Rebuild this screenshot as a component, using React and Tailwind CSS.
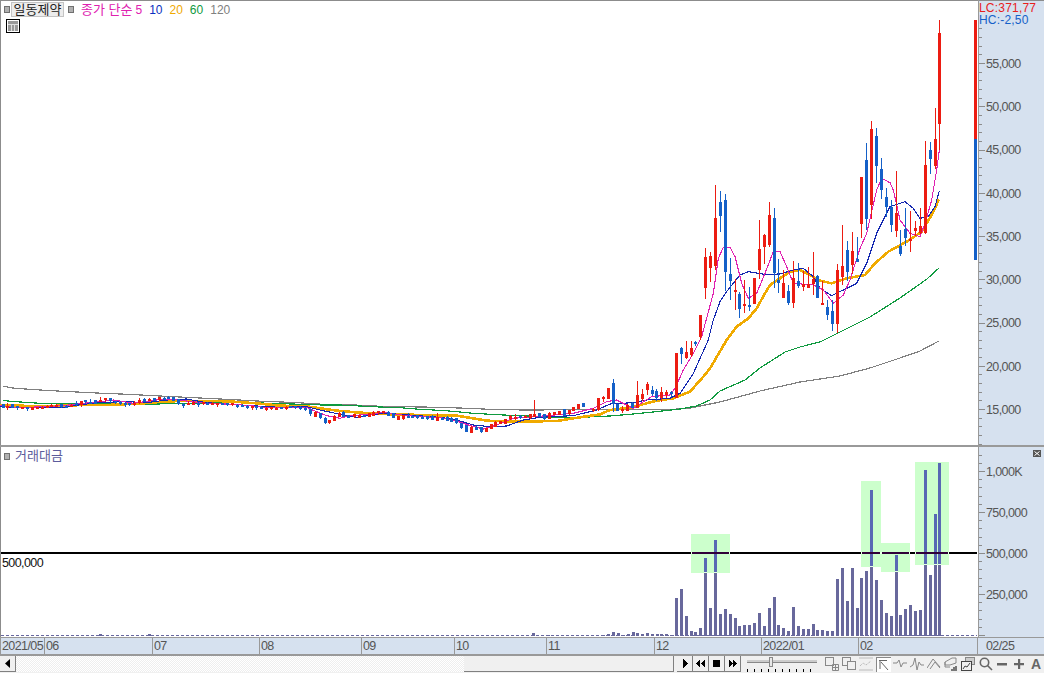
import React from "react";

const RED = "#ec1c12";
const BLUE = "#1460c8";

// crops were read at 3x, so points come in as [x, y] of the crop and get scaled back
const crop = (ox, oy, list) => list.map(([x, y]) => [ox + x / 3, oy + y / 3]);
const lineOf = (pts) => pts.map((p) => p.join(",")).join(" ");

// flat part of the chart: [x, colour, body top, body bottom, wick top, wick bottom]
const flatA = [
  [10, "b", 88, 98, 86, 100], [22, "r", 92, 96, 85, 105], [37, "b", 88, 98, 87, 99], [52, "b", 92, 100, 92, 105],
  [67, "r", 96, 101, 95, 102], [82, "b", 97, 103, 96, 107], [97, "r", 97, 104, 96, 105], [112, "r", 97, 100, 96, 101],
  [127, "r", 96, 100, 94, 101], [140, "r", 93, 97, 91, 98], [154, "r", 90, 95, 87, 97], [169, "r", 90, 93, 87, 96],
  [184, "b", 87, 97, 86, 98], [199, "b", 92, 95, 90, 96], [214, "r", 90, 93, 86, 96], [229, "b", 83, 91, 78, 93],
  [244, "r", 79, 91, 78, 95], [256, "b", 76, 82, 76, 88], [271, "b", 82, 85, 72, 87], [286, "b", 76, 86, 75, 87],
  [301, "r", 75, 78, 65, 80], [316, "r", 70, 73, 70, 80], [331, "b", 70, 77, 70, 85], [346, "b", 78, 85, 77, 86],
  [361, "b", 80, 88, 79, 89], [376, "b", 83, 88, 80, 96], [388, "b", 84, 90, 83, 94], [403, "r", 83, 88, 78, 93],
  [418, "r", 75, 83, 70, 88], [433, "b", 72, 80, 69, 81], [448, "r", 72, 75, 69, 78], [463, "b", 70, 78, 69, 79],
  [478, "r", 67, 75, 67, 78], [493, "b", 68, 72, 65, 76], [505, "b", 67, 72, 64, 73], [520, "b", 66, 77, 65, 78],
  [535, "b", 72, 86, 71, 90], [550, "b", 87, 90, 85, 98], [565, "r", 84, 89, 78, 91], [580, "r", 80, 90, 77, 91],
  [595, "b", 83, 90, 82, 95], [610, "r", 82, 87, 80, 90], [622, "b", 84, 88, 82, 90], [637, "r", 84, 89, 82, 91],
  [652, "r", 85, 90, 84, 96], [667, "b", 85, 89, 83, 90], [682, "b", 85, 90, 84, 92], [697, "r", 85, 90, 83, 94],
  [712, "b", 89, 97, 88, 98], [727, "b", 89, 93, 88, 94], [742, "b", 92, 96, 91, 102], [757, "r", 94, 100, 92, 106],
  [769, "b", 93, 100, 92, 104], [784, "b", 95, 100, 94, 101], [799, "r", 98, 106, 97, 107], [814, "r", 97, 102, 96, 105],
  [829, "r", 98, 100, 97, 101], [844, "b", 97, 100, 96, 101], [859, "r", 95, 100, 94, 106], [871, "b", 93, 98, 92, 100],
  [886, "b", 93, 100, 92, 101], [901, "b", 95, 100, 94, 105], [916, "b", 98, 106, 97, 107], [931, "b", 103, 117, 102, 122],
  [946, "r", 110, 125, 109, 126], [961, "b", 115, 130, 114, 133], [976, "b", 128, 145, 127, 146], [988, "r", 135, 145, 134, 148],
  [1003, "r", 122, 137, 120, 138],
];
const flatB = [
  [-3, "r", 113, 125, 112, 126], [10, "b", 112, 125, 108, 126], [25, "b", 120, 128, 119, 129], [43, "r", 118, 125, 117, 128],
  [58, "r", 120, 128, 119, 129], [73, "b", 120, 125, 119, 126], [88, "r", 115, 125, 114, 126], [100, "r", 110, 122, 109, 123],
  [115, "r", 108, 115, 107, 120], [130, "r", 108, 115, 107, 118], [145, "b", 110, 122, 109, 123], [160, "b", 115, 129, 114, 130],
  [175, "r", 124, 134, 123, 135], [190, "r", 121, 133, 120, 134], [205, "b", 122, 126, 115, 130], [217, "b", 122, 125, 121, 126],
  [232, "b", 120, 130, 119, 131], [247, "b", 125, 128, 124, 129], [262, "b", 123, 133, 122, 134], [277, "b", 122, 135, 121, 136],
  [292, "r", 127, 137, 115, 138], [307, "b", 128, 133, 127, 134], [322, "b", 125, 138, 124, 139], [334, "b", 128, 140, 127, 141],
  [349, "b", 130, 145, 129, 146], [364, "b", 145, 160, 144, 162], [379, "b", 150, 170, 149, 171], [394, "r", 155, 174, 154, 175],
  [409, "b", 155, 165, 154, 166], [424, "b", 157, 172, 156, 173], [439, "r", 160, 170, 159, 171], [454, "r", 148, 162, 147, 163],
  [466, "r", 140, 155, 139, 156], [481, "r", 138, 147, 137, 148], [496, "r", 132, 147, 131, 148], [511, "r", 122, 133, 121, 134],
  [526, "r", 125, 133, 118, 135], [541, "b", 122, 130, 121, 131], [556, "r", 122, 128, 121, 129], [571, "r", 118, 130, 117, 131],
  [583, "r", 118, 125, 75, 126], [598, "b", 114, 125, 113, 126], [613, "b", 118, 133, 117, 134], [628, "r", 113, 132, 112, 133],
  [643, "r", 112, 120, 111, 121], [658, "r", 108, 120, 107, 121], [673, "b", 103, 122, 102, 123], [688, "r", 105, 118, 104, 119],
  [700, "r", 96, 108, 95, 109], [715, "r", 87, 102, 86, 103], [730, "b", 85, 95, 84, 96], [745, "b", 95, 108, 94, 109],
  [760, "r", 98, 105, 97, 106],
];
// steep part, already in page pixels
const steep = [
  [593, "r", 409, 410, 408, 412], [598, "r", 398, 410, 398, 411], [603, "r", 397, 399, 396, 402], [608, "r", 388, 399, 388, 399],
  [613, "b", 383, 404, 379, 412], [617, "b", 404, 411, 404, 411], [622, "r", 409, 410, 406, 413], [627, "r", 405, 411, 404, 411],
  [632, "b", 403, 408, 402, 408], [637, "r", 395, 408, 381, 408], [642, "r", 394, 399, 389, 401], [647, "r", 384, 390, 382, 395],
  [652, "b", 390, 394, 386, 396], [656, "b", 391, 398, 389, 401], [661, "r", 392, 398, 387, 402], [666, "r", 392, 395, 390, 398],
  [671, "b", 392, 394, 391, 397], [676, "r", 353, 398, 353, 398], [681, "b", 348, 354, 347, 364], [686, "r", 352, 358, 341, 359],
  [691, "r", 348, 355, 341, 357], [695, "b", 342, 344, 341, 346], [700, "r", 315, 337, 315, 340], [705, "r", 257, 288, 248, 299],
  [710, "r", 256, 268, 252, 282], [715, "r", 218, 266, 185, 270], [720, "b", 202, 216, 191, 232], [725, "b", 200, 272, 194, 291],
  [730, "b", 274, 281, 258, 300], [735, "r", 290, 292, 279, 310], [739, "b", 294, 309, 292, 318], [744, "r", 304, 305, 280, 313],
  [749, "b", 305, 307, 287, 311], [754, "r", 278, 304, 278, 304], [759, "r", 249, 270, 220, 279], [764, "r", 235, 247, 234, 264],
  [769, "r", 215, 245, 202, 247], [774, "b", 218, 273, 208, 288], [778, "b", 280, 283, 259, 293], [783, "r", 283, 298, 270, 298],
  [788, "b", 291, 303, 285, 305], [793, "r", 278, 303, 261, 308], [798, "b", 281, 286, 263, 288], [803, "r", 284, 287, 271, 291],
  [808, "r", 284, 288, 267, 288], [813, "r", 279, 284, 252, 295], [817, "b", 276, 298, 275, 298], [822, "r", 303, 305, 281, 305],
  [827, "b", 307, 315, 300, 320], [832, "b", 311, 324, 300, 331], [837, "r", 270, 324, 264, 333], [842, "r", 266, 277, 225, 285],
  [847, "b", 250, 272, 241, 281], [852, "r", 251, 265, 232, 274], [857, "b", 259, 262, 237, 262], [861, "r", 177, 224, 177, 238],
  [866, "b", 160, 219, 143, 230], [871, "r", 129, 205, 121, 219], [876, "b", 136, 166, 128, 183], [881, "b", 169, 190, 158, 199],
  [886, "b", 197, 207, 188, 217], [891, "b", 207, 225, 200, 232], [896, "r", 213, 231, 171, 237], [900, "b", 246, 254, 230, 256],
  [905, "b", 229, 238, 208, 246], [910, "r", 239, 241, 211, 252], [915, "r", 228, 231, 221, 236], [920, "r", 226, 233, 208, 234],
  [925, "r", 165, 233, 141, 234], [930, "b", 150, 159, 142, 174], [935, "r", 139, 166, 108, 169], [939, "r", 33, 124, 20, 150],
];

const toPage = (ox, rows) =>
  rows.map(([x, c, t, b, h, l]) => [
    Math.round(ox + x / 3),
    c,
    Math.round(375 + t / 3),
    Math.round(375 + b / 3),
    Math.round(375 + h / 3),
    Math.round(375 + l / 3),
  ]);
const candles = [...toPage(0, flatA), ...toPage(340, flatB.filter((r) => r[0] < 745)), ...steep];

const ma5 = [
  ...crop(0, 375, [[0, 92], [60, 98], [130, 95], [190, 92], [250, 85], [300, 80], [340, 75], [400, 85], [470, 75], [520, 72], [560, 78], [620, 85], [700, 88], [760, 93], [800, 98], [860, 97], [920, 97], [945, 108], [980, 122], [1020, 130]]),
  ...crop(340, 375, [[30, 122], [90, 118], [130, 112], [200, 122], [300, 128], [350, 138], [385, 150], [430, 162], [470, 150], [520, 130], [620, 122], [700, 115], [760, 100]]),
  ...crop(590, 330, [[50, 215], [80, 210], [110, 225], [130, 235], [160, 215], [185, 200], [240, 195], [255, 175], [280, 120], [310, 70], [335, 20]]),
  ...crop(670, 170, [[130, 370], [145, 265], [160, 232], [180, 232], [195, 260], [215, 340], [235, 385], [260, 370], [285, 310], [310, 245], [330, 245]]),
  ...crop(780, 110, [[20, 470], [40, 520], [100, 525], [130, 540], [160, 580], [190, 555], [210, 510], [240, 415], [260, 370], [290, 240], [305, 205], [330, 218]]),
  ...crop(890, 10, [[10, 540], [30, 630], [60, 670], [90, 680], [105, 640], [125, 570], [140, 480], [148, 420]]),
];
const ma10 = [
  ...crop(0, 375, [[0, 95], [60, 97], [190, 97], [250, 88], [310, 82], [380, 80], [440, 83], [500, 75], [560, 72], [620, 83], [700, 88], [770, 93], [840, 97], [920, 95], [960, 105], [1020, 118]]),
  ...crop(340, 375, [[50, 127], [100, 118], [140, 115], [180, 118], [300, 127], [350, 135], [400, 150], [450, 155], [500, 153], [550, 135], [600, 127], [700, 122]]),
  ...crop(590, 330, [[20, 240], [60, 222], [130, 218], [170, 210], [240, 205], [270, 190], [310, 130]]),
  ...crop(670, 170, [[115, 510], [130, 450], [150, 395], [170, 365], [210, 315], [235, 305], [265, 310], [285, 313], [330, 312]]),
  ...crop(780, 110, [[40, 480], [70, 475], [100, 500], [120, 535], [155, 557], [190, 540], [230, 520], [260, 460], [290, 370], [320, 310]]),
  ...crop(890, 10, [[0, 590], [45, 575], [70, 595], [90, 625], [115, 620], [135, 590], [148, 542]]),
];
const ma20 = [
  ...crop(0, 375, [[0, 90], [60, 92], [120, 94], [250, 90], [320, 90], [420, 86], [490, 80], [540, 78], [650, 78], [700, 80], [770, 85], [840, 92], [920, 94], [960, 100], [1020, 108]]),
  ...crop(340, 375, [[60, 113], [150, 118], [350, 122], [400, 130], [440, 137], [520, 140], [650, 138], [700, 130], [780, 118]]),
  ...crop(590, 330, [[60, 240], [120, 233], [200, 212], [250, 205], [300, 185], [340, 140], [360, 115]]),
  ...crop(670, 170, [[170, 510], [200, 470], [235, 445], [260, 415], [285, 370], [300, 345], [330, 325]]),
  ...crop(780, 110, [[30, 485], [60, 480], [90, 495], [120, 512], [155, 520], [200, 505], [255, 495], [285, 460], [325, 425]]),
  ...crop(890, 10, [[50, 695], [95, 665], [125, 615], [147, 568]]),
];
const ma60 = [
  ...crop(0, 375, [[10, 76], [30, 79], [75, 82], [120, 85], [290, 85], [440, 88], [535, 85], [650, 84], [750, 83], [970, 90], [1020, 90]]),
  ...crop(340, 375, [[60, 93], [120, 96], [180, 98], [240, 103], [300, 106], [340, 109], [400, 115], [490, 120], [560, 123], [650, 127], [720, 127]]),
  ...crop(590, 330, [[60, 258], [130, 252], [200, 245], [270, 237], [320, 228], [360, 210]]),
  [720, 391], [745, 380], [760, 368], [785, 352], [800, 347], [820, 342], [870, 317], [900, 298], [927, 279], [939, 268],
];
const ma120 = [
  ...crop(0, 375, [[10, 34], [45, 40], [90, 43], [135, 46], [190, 49], [250, 52], [310, 55], [385, 58], [440, 61], [500, 64], [560, 67], [620, 70], [680, 73], [735, 76], [790, 79], [870, 82], [925, 85], [970, 88]]),
  ...crop(340, 375, [[0, 88], [65, 91], [125, 94], [300, 97], [385, 100], [450, 103], [550, 105], [1000, 103]]),
  [690, 408], [720, 402], [760, 391], [800, 382], [840, 376], [870, 368], [900, 358], [920, 351], [939, 341],
];

// volume bars: [x in the 3x crop, top in the 3x crop]
const volume = [
  [4, 552], [19, 552], [34, 555], [49, 444], [64, 417], [79, 498], [94, 543], [106, 546], [121, 534], [136, 324],
  [151, 474], [166, 270], [181, 492], [196, 477], [211, 492], [226, 504], [238, 528], [253, 525], [268, 525], [283, 519],
  [298, 489], [313, 528], [328, 474], [343, 441], [355, 525], [370, 534], [385, 543], [400, 471], [415, 528], [430, 537],
  [445, 537], [460, 522], [472, 540], [487, 540], [502, 543], [517, 543], [532, 387], [547, 354], [562, 453], [577, 354],
  [592, 474], [604, 384], [619, 363], [634, 120], [649, 390], [664, 450], [679, 489], [694, 498], [709, 315], [721, 495],
  [736, 477], [751, 465], [766, 483], [781, 480], [796, 60], [811, 375], [826, 192], [838, 39],
].map(([x, y]) => [Math.round(660 + x / 3), Math.round(450 + y / 3)]);
const smallVolume = [
  [100, 634], [149, 634], [533, 633], [548, 635], [603, 635], [608, 634], [613, 632], [618, 633], [623, 635],
  [628, 634], [633, 632], [637, 633], [642, 634], [647, 633], [652, 634], [657, 634],
];
const bars = [...smallVolume, ...volume];

// highlighted boxes on the volume pane [x1, y1, x2, y2]
const boxes = [
  [691, 534, 730, 573],
  [861, 481, 881, 567],
  [881, 543, 910, 572],
  [915, 462, 949, 565],
];

const priceTicks = [
  ["55,000", 63], ["50,000", 106], ["45,000", 149], ["40,000", 193], ["35,000", 236],
  ["30,000", 279], ["25,000", 322], ["20,000", 366], ["15,000", 409],
];
const volumeTicks = [["1,000K", 471], ["750,000", 512], ["500,000", 553], ["250,000", 594]];
const dates = [
  ["2021/05", "w-[45px] border-l border-[#999]"],
  ["06", "w-[108px]"],
  ["07", "w-[107px]"],
  ["08", "w-[102px]"],
  ["09", "w-[93px]"],
  ["10", "w-[92px]"],
  ["11", "w-[108px]"],
  ["12", "w-[107px]"],
  ["2022/01", "w-[97px]"],
  ["02", "w-[119px]"],
];

const range = (from, to, step) => {
  const out = [];
  for (let v = from; v <= to; v += step) out.push(v);
  return out;
};

const Marker = () => <span className="block w-[6px] h-[7px] bg-[#b0b0b0] border border-[#707070]" />;

const PriceChart = () => (
  <svg width="978" height="445" viewBox="0 0 978 445" className="block shrink-0" shapeRendering="crispEdges">
    <path d="M0 0.5H978M0.5 0V445" stroke="#8c8c8c" fill="none" />
    <polyline points={lineOf(ma120)} fill="none" stroke="#808080" strokeWidth="1.2" />
    <polyline points={lineOf(ma60)} fill="none" stroke="#0f9a3f" strokeWidth="1.2" />
    <polyline points={lineOf(ma20)} fill="none" stroke="#f0aa00" strokeWidth="2.6" />
    <polyline points={lineOf(ma10)} fill="none" stroke="#1428b0" strokeWidth="1.1" />
    <polyline points={lineOf(ma5)} fill="none" stroke="#e020b0" strokeWidth="1.1" />
    {candles.map(([x, c, t, b, h, l]) => (
      <g key={x} fill={c === "r" ? RED : BLUE}>
        <rect x={x} y={h} width="1" height={Math.max(l - h, 1)} />
        <rect x={x - 1} y={t} width="3" height={Math.max(b - t, 2)} />
      </g>
    ))}
    <rect x="974" y="20" width="3" height="119" fill={RED} />
    <rect x="974" y="139" width="3" height="121" fill={BLUE} />
  </svg>
);

const PriceAxis = () => (
  <svg width="65" height="445" viewBox="979 0 65 445" className="block" shapeRendering="crispEdges">
    <path d="M979 0.5H1044" stroke="#8c8c8c" />
    {range(0, 50, 1).map((i) => {
      const y = Math.round(63 + (i - 5) * 8.65);
      return y > 25 && y < 445 ? <rect key={i} x="979" y={y} width={i % 5 === 0 ? 6 : 3} height="1" fill="#8c8c8c" /> : null;
    })}
    {priceTicks.map(([label, y]) => (
      <text key={label} x="986" y={y + 5} className="text-[12.5px] tracking-[-0.6px] fill-[#555]" shapeRendering="auto">
        {label}
      </text>
    ))}
  </svg>
);

const VolumeChart = () => (
  <svg width="978" height="190" viewBox="0 447 978 190" className="block shrink-0" shapeRendering="crispEdges">
    <defs>
      <clipPath id="hl">
        {boxes.map(([x1, y1, x2, y2]) => (
          <rect key={x1} x={x1} y={y1} width={x2 - x1} height={y2 - y1} />
        ))}
      </clipPath>
    </defs>
    <path d="M0.5 447V637" stroke="#8c8c8c" />
    {boxes.map(([x1, y1, x2, y2]) => (
      <rect key={x1} x={x1} y={y1} width={x2 - x1} height={y2 - y1} fill="#ccffcc" />
    ))}
    <line x1="1" x2="977" y1="635.5" y2="635.5" stroke="#6868a0" strokeDasharray="3 2" />
    {bars.map(([x, y]) => (
      <rect key={x} x={x - 1} y={y} width="3" height={636 - y} fill="#68689c" />
    ))}
    <rect x="1" y="552" width="976" height="2" fill="#000" />
    <g clipPath="url(#hl)">
      {bars.map(([x, y]) => (
        <rect key={x} x={x - 1} y={y} width="3" height={636 - y} fill="#5868b4" />
      ))}
      <rect x="1" y="552" width="976" height="2" fill="#300038" />
    </g>
    {boxes.map(([x1, , x2, y2]) => (
      <g key={x1} fill="#e8ffe8">
        <rect x={x1} y="552" width="1" height="2" />
        <rect x={x2 - 1} y="552" width="1" height="2" />
        {bars
          .filter(([x, y]) => x > x1 && x < x2 && y < y2)
          .map(([x]) => (
            <rect key={x} x={x - 1} y={y2 - 1} width="3" height="1" />
          ))}
      </g>
    ))}
  </svg>
);

const VolumeAxis = () => (
  <svg width="65" height="190" viewBox="979 447 65 190" className="block" shapeRendering="crispEdges">
    {range(0, 22, 1).map((i) => {
      const y = Math.round(471 + (i - 2) * 8.2);
      return <rect key={i} x="979" y={y} width={(i - 2) % 5 === 0 ? 6 : 3} height="1" fill="#8c8c8c" />;
    })}
    {volumeTicks.map(([label, y]) => (
      <text key={label} x="986" y={y + 5} className="text-[12.5px] tracking-[-0.6px] fill-[#555]" shapeRendering="auto">
        {label}
      </text>
    ))}
  </svg>
);

const TableIcon = () => (
  <svg width="14" height="14" viewBox="0 0 14 14" className="block" shapeRendering="crispEdges">
    <rect x="0.5" y="0.5" width="13" height="13" fill="#fff" stroke="#000" />
    <rect x="2" y="2" width="10" height="10" fill="#999" />
    <path d="M2 5.5H12M5.5 5V12M8.5 5V12" stroke="#ddd" fill="none" />
  </svg>
);

const Play = ({ d }) => (
  <button className="w-[16px] h-[16px] flex items-center justify-center bg-[#f0f0f0] border-r border-b border-[#808080]">
    <svg width="10" height="9" viewBox="0 0 10 9" className="block" shapeRendering="crispEdges">
      <path d={d} fill="#000" />
    </svg>
  </button>
);

const ToolIcon = ({ children, pressed }) => (
  <span className={pressed ? "w-[15px] h-[15px] border-l border-t border-[#888] bg-white" : "w-[15px] h-[15px]"}>
    <svg width="14" height="14" viewBox="0 0 14 14" fill="none" stroke="#888" className="block">
      {children}
    </svg>
  </span>
);

const Toolbar = () => (
  <div className="h-[17px] flex items-start bg-[#f0f0f0]">
    <button className="w-[16px] h-[16px] flex items-center justify-center border-r border-b border-[#808080]">
      <svg width="5" height="9" viewBox="0 0 5 9" className="block">
        <path d="M5 0V9L0 4.5Z" fill="#000" />
      </svg>
    </button>
    <div className="w-[658px] h-[16px] flex justify-end bg-[repeating-conic-gradient(#eeeeee_0_25%,#ffffff_0_50%)] bg-[length:2px_2px]">
      <div className="w-[210px] h-full bg-[#f0f0f0] border-r border-b border-[#808080]" />
    </div>
    <div className="flex ml-[3px]">
      <Play d="M3 0L8 4.5L3 9Z" />
      <Play d="M0 4.5L4 1V8ZM5 4.5L9 1V8Z" />
      <Play d="M1 1H8V8H1Z" />
      <Play d="M1 1L5 4.5L1 8ZM5 1L9 4.5L5 8Z" />
    </div>
    <div className="w-[70px] ml-[6px] h-[16px] flex flex-col justify-between pt-[4px]">
      <div className="relative h-[3px] bg-[#ccc] border-b border-[#888]">
        <span className="absolute left-[22px] -top-[3px] w-[4px] h-[10px] bg-[#e8e8e8] border border-[#888]" />
      </div>
      <div className="h-[3px] bg-[repeating-linear-gradient(90deg,#000_0_1px,transparent_1px_7px)]" />
    </div>
    <div className="flex items-center gap-[2px] ml-[8px] pt-[1px]">
      <ToolIcon>
        <rect x="0.5" y="0.5" width="8" height="8" />
        <path d="M7.5 7.5h6v6h-6zM10.5 7.5v6M7.5 10.5h6" />
      </ToolIcon>
      <ToolIcon>
        <rect x="0.5" y="0.5" width="8" height="8" />
        <rect x="5.5" y="4.5" width="8" height="8" fill="#f0f0f0" />
      </ToolIcon>
      <ToolIcon>
        <path d="M0.5 1h13M0.5 13h13" strokeDasharray="1 1" />
        <path d="M1 9l3-3 3 2 5-4" stroke="#aaa" strokeDasharray="1 1" />
      </ToolIcon>
      <ToolIcon pressed>
        <path d="M2 2.5h8M3 3v8M4 4l7 8" stroke="#666" />
      </ToolIcon>
      <ToolIcon>
        <path d="M0 6h4l2-3 2 7 2-4h4" />
      </ToolIcon>
      <ToolIcon>
        <path d="M0 10l3-2 2-7 2 12 2-8 2 3h3" />
      </ToolIcon>
      <ToolIcon>
        <path d="M0 11l6-9 7 8M3 12l5-7 5 6" />
      </ToolIcon>
      <ToolIcon>
        <path d="M1 5l7-4h4v5l-6 2H1zM1 5v5h5" />
        <path d="M8 12v2M10 10v4M12 9v5" stroke="#000" />
      </ToolIcon>
      <ToolIcon>
        <rect x="4.5" y="0.5" width="9" height="7" fill="#ccc" />
        <rect x="0.5" y="4.5" width="10" height="9" fill="#f0f0f0" stroke="#444" />
        <path d="M2 12l2-3 2 1 3-4" stroke="#444" />
      </ToolIcon>
    </div>
    <div className="flex items-center ml-[3px] pt-[1px]">
      <svg width="14" height="14" viewBox="0 0 14 14" fill="none" stroke="#666" strokeWidth="1.6" className="block">
        <circle cx="5.5" cy="5.5" r="4.2" />
        <path d="M8.5 8.5L13 13" />
      </svg>
      <svg width="10" height="10" viewBox="0 0 10 10" className="block ml-[4px]">
        <rect y="4" width="10" height="2.5" fill="#666" />
      </svg>
      <svg width="10" height="10" viewBox="0 0 10 10" className="block ml-[7px]">
        <path d="M0 4h4V0h2.2v4H10v2.2H6.2V10H4V6.2H0Z" fill="#666" />
      </svg>
      <span className="ml-[7px] text-[14px] leading-[14px] font-bold text-[#666]">A</span>
    </div>
  </div>
);

export default function App() {
  return (
    <div className="w-[1044px] h-[673px] overflow-hidden bg-white font-['Liberation_Sans','Noto_Sans_CJK_KR',sans-serif]">
      <div className="relative flex h-[445px]">
        <PriceChart />
        <div className="flex-1 bg-[#d6e1ef] border-l border-[#999]">
          <PriceAxis />
        </div>
        <div className="absolute left-[4px] top-[2px] flex items-center text-[13px] leading-[14px]">
          <Marker />
          <span className="w-[53px] h-[15px] ml-[1px] text-center text-[#222] bg-[#ececec] border border-[#c4c4c4]">일동제약</span>
          <span className="ml-[4px]">
            <Marker />
          </span>
          <span className="ml-[7px] text-[#e020b0]">종가 단순</span>
          <span className="ml-[3px] text-[#e020b0] text-[12px]">5</span>
          <span className="ml-[7px] text-[#0a30c0] text-[12px]">10</span>
          <span className="ml-[7px] text-[#f0aa00] text-[12px]">20</span>
          <span className="ml-[7px] text-[#0f9a3f] text-[12px]">60</span>
          <span className="ml-[7px] text-[#808080] text-[12px]">120</span>
        </div>
        <span className="absolute left-[6px] top-[19px]">
          <TableIcon />
        </span>
        <div className="absolute left-[979px] top-[2px] text-[12px] leading-[12px] tracking-[0.2px]">
          <div className="text-[#e8201c]">LC:371,77</div>
          <div className="text-[#1460c8]">HC:-2,50</div>
        </div>
      </div>
      <div className="h-[2px] bg-[#999]" />
      <div className="relative flex h-[190px]">
        <VolumeChart />
        <div className="flex-1 bg-[#d6e1ef] border-l border-[#999]">
          <VolumeAxis />
        </div>
        <div className="absolute left-[4px] top-[2px] flex items-center gap-[5px] text-[13px] leading-[14px] text-[#5c5c9c]">
          <Marker />
          <span>거래대금</span>
        </div>
        <span className="absolute left-[2px] top-[109px] text-[12.5px] leading-[14px] tracking-[-0.6px] text-[#111]">500,000</span>
        <span className="absolute left-[1033px] top-[3px] w-[8px] h-[7px] bg-[#555] flex items-center justify-center">
          <svg width="6" height="5" viewBox="0 0 6 5" className="block">
            <path d="M0.5 0.5L5.5 4.5M5.5 0.5L0.5 4.5" stroke="#fff" />
          </svg>
        </span>
      </div>
      <div className="flex h-[19px] bg-[#d6e1ef] border-t border-b-2 border-[#999] text-[12.5px] leading-[16px] tracking-[-0.6px] text-[#555]">
        {dates.map(([label, w]) => (
          <span key={label + w} className={`${w} pl-[1px] border-r border-[#999] overflow-hidden whitespace-nowrap`}>
            {label}
          </span>
        ))}
        <span className="pl-[8px]">02/25</span>
      </div>
      <Toolbar />
    </div>
  );
}
